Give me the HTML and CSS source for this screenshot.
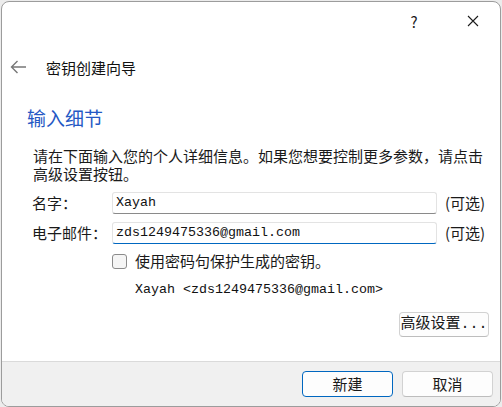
FILE: index.html
```html
<!DOCTYPE html>
<html lang="zh-CN">
<head>
<meta charset="utf-8">
<title>密钥创建向导</title>
<link rel="stylesheet" href="styles.css">
</head>
<body>
<div class="window">
  <div class="titlebar">
    <div class="tb-btn help">?</div>
    <div class="tb-btn close">
      <svg width="12" height="12" viewBox="0 0 12 12"><path d="M1 1 L11 11 M11 1 L1 11" stroke="#1c1c1c" stroke-width="1.1" fill="none"/></svg>
    </div>
  </div>
  <div class="nav">
    <svg class="back" width="16" height="14" viewBox="0 0 16 14"><path d="M1.5 7 H16 M7.5 1 L1.5 7 L7.5 13" stroke="#777" stroke-width="1.4" fill="none" stroke-linejoin="miter"/></svg>
    <span class="nav-title">密钥创建向导</span>
  </div>
  <div class="content">
    <h1 class="heading">输入细节</h1>
    <p class="desc">请在下面输入您的个人详细信息。如果您想要控制更多参数，请点击高级设置按钮。</p>
    <div class="form">
      <span class="label">名字：</span>
      <div class="input">Xayah</div>
      <span class="opt">(可选)</span>
      <span class="label">电子邮件：</span>
      <div class="input focused">zds1249475336@gmail.com</div>
      <span class="opt">(可选)</span>
    </div>
    <div class="check-row">
      <span class="checkbox"></span>
      <span class="check-label">使用密码句保护生成的密钥。</span>
    </div>
    <div class="preview">Xayah &lt;zds1249475336@gmail.com&gt;</div>
    <div class="adv-row">
      <button class="btn adv">高级设置...</button>
    </div>
  </div>
  <div class="footer">
    <button class="btn default">新建</button>
    <button class="btn">取消</button>
  </div>
</div>
</body>
</html>
```
FILE: styles.css
```css
html, body {
  margin: 0;
  padding: 0;
  background: #ececec;
}
body {
  font-family: "Noto Sans CJK SC", "Noto Sans", sans-serif;
  color: #1a1a1a;
  font-size: 15px;
}
.window {
  box-sizing: border-box;
  margin: 1px 0 0 1px;
  width: 500px;
  height: 406px;
  border: 1px solid #9c9c9c;
  border-radius: 8px;
  background: #ffffff;
  overflow: hidden;
  display: flex;
  flex-direction: column;
}
.titlebar {
  height: 38px;
  display: flex;
  justify-content: flex-end;
  padding-right: 4px;
  gap: 13px;
  flex: none;
}
.tb-btn {
  width: 46px;
  height: 38px;
  display: flex;
  align-items: center;
  justify-content: center;
  font-size: 15px;
  color: #1c1c1c;
}
.nav {
  margin-top: 14px;
  height: 28px;
  display: flex;
  align-items: center;
  padding-left: 8px;
  gap: 20px;
  flex: none;
}
.back {
  display: block;
  margin-top: -3px;
}
.nav-title {
  font-size: 15px;
  color: #111;
  line-height: 28px;
}
.content {
  flex: 1;
  display: flex;
  flex-direction: column;
}
.heading {
  margin: 24px 0 0 0;
  padding-left: 25px;
  font-size: 19px;
  line-height: 24px;
  font-weight: normal;
  color: #2458c4;
}
.desc {
  margin: 17px 0 0 0;
  padding: 0 12px 0 31px;
  font-size: 15px;
  line-height: 18px;
}
.form {
  margin-top: 9px;
  padding-left: 30px;
  display: grid;
  grid-template-columns: 72px 325px auto;
  grid-auto-rows: 22px;
  column-gap: 8px;
  row-gap: 8px;
  align-items: center;
}
.label {
  line-height: 22px;
  white-space: nowrap;
  min-width: 0;
}
.input {
  box-sizing: border-box;
  height: 22px;
  border: 1px solid #e3e3e3;
  border-bottom-color: #8a8a8a;
  border-radius: 3px;
  padding-left: 3px;
  font-family: "Liberation Mono", "Noto Sans CJK SC", monospace;
  font-size: 13.33px;
  line-height: 20px;
  color: #111;
  background: #fff;
}
.input.focused {
  border-bottom: 1px solid #0067c0;
}
.opt {
  line-height: 22px;
}
.check-row {
  margin-top: 8px;
  height: 18px;
  padding-left: 110px;
  display: flex;
  align-items: center;
  gap: 8px;
}
.checkbox {
  box-sizing: border-box;
  width: 15px;
  height: 15px;
  border: 1px solid #8b8b8b;
  border-radius: 3px;
  background: #f5f5f5;
}
.check-label {
  line-height: 18px;
}
.preview {
  margin-top: 11px;
  padding-left: 133px;
  line-height: 18px;
  font-family: "Liberation Mono", "Noto Sans CJK SC", monospace;
  font-size: 13.33px;
  color: #111;
}
.adv-row {
  margin-top: 13px;
  display: flex;
  justify-content: flex-end;
  padding-right: 11px;
}
.btn {
  box-sizing: border-box;
  margin: 0;
  padding: 0;
  width: 91px;
  height: 26px;
  border: 1px solid #d2d2d2;
  border-bottom-color: #bdbdbd;
  border-radius: 4px;
  background: #fdfdfd;
  font-family: "Noto Sans CJK SC", "Noto Sans", sans-serif;
  font-size: 15px;
  color: #1a1a1a;
  line-height: 24px;
}
.btn.adv {
  width: 90px;
  height: 25px;
  line-height: 23px;
  font-family: "Liberation Mono", "Noto Sans CJK SC", monospace;
  font-size: 15px;
  letter-spacing: 0;
}
.btn.default {
  border: 1px solid #0067c0;
}
.footer {
  flex: none;
  box-sizing: border-box;
  height: 45px;
  border-top: 1px solid #dadada;
  background: #f0f0f0;
  display: flex;
  justify-content: flex-end;
  gap: 9px;
  padding: 9px 7px 0 0;
}
```
